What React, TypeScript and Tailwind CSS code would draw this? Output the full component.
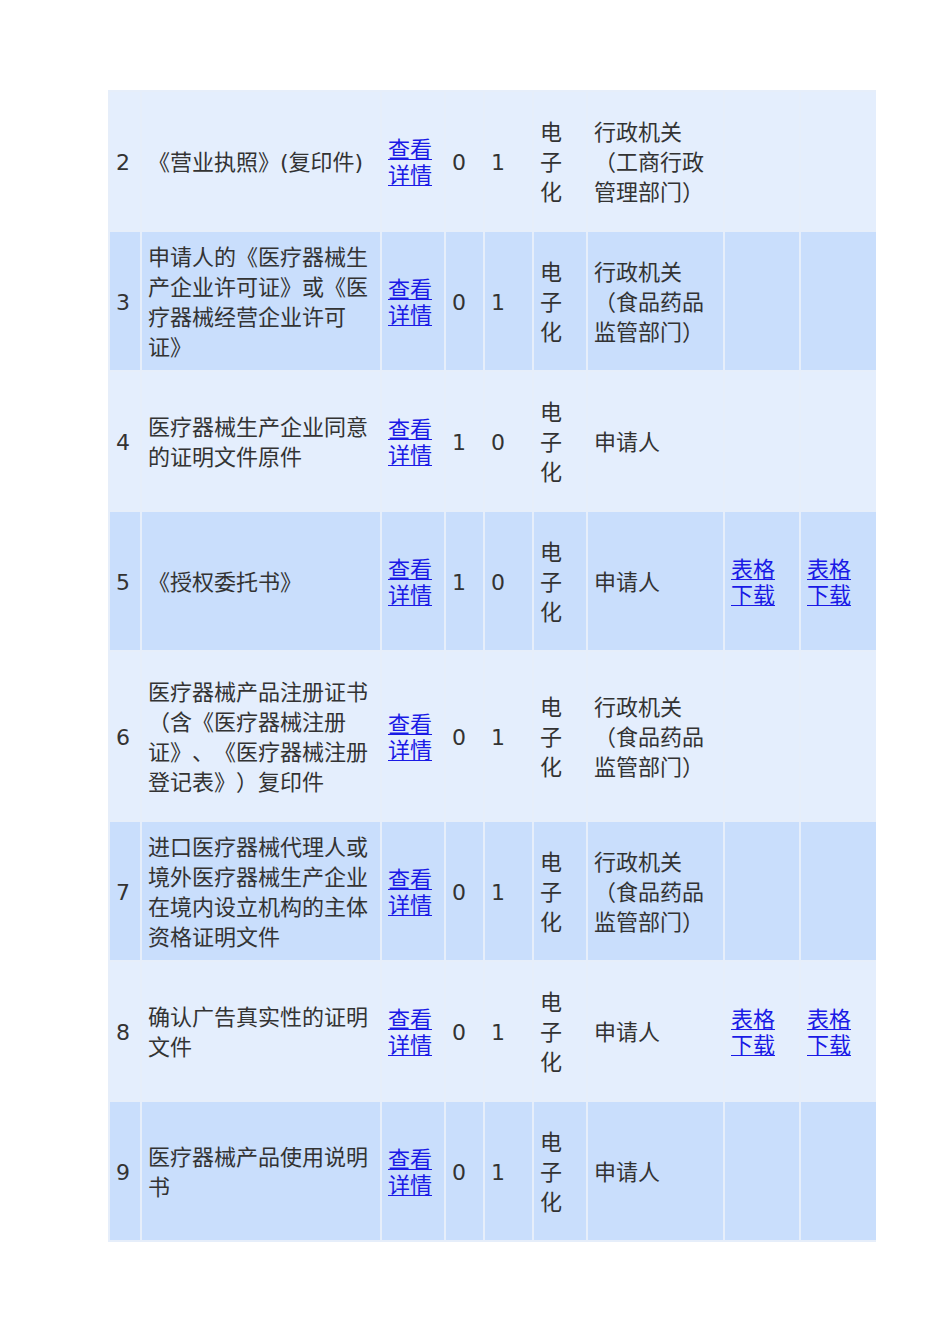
import React from 'react';

type Row = {
  no: string;
  name: React.ReactNode;
  a: string;
  b: string;
  source: React.ReactNode;
  forms?: boolean;
  tall?: boolean;
};

const rows: Row[] = [
  { no: '2', name: <>《营业执照》(复印件)</>, a: '0', b: '1', source: <>行政机关<br />（工商行政<br />管理部门）</> },
  {
    no: '3',
    name: <>申请人的《医疗器械生<br />产企业许可证》或《医<br />疗器械经营企业许可<br />证》</>,
    a: '0', b: '1',
    source: <>行政机关<br />（食品药品<br />监管部门）</>,
  },
  { no: '4', name: <>医疗器械生产企业同意<br />的证明文件原件</>, a: '1', b: '0', source: <>申请人</> },
  { no: '5', name: <>《授权委托书》</>, a: '1', b: '0', source: <>申请人</>, forms: true },
  {
    no: '6',
    name: <>医疗器械产品注册证书<br />（含《医疗器械注册<br />证》、《医疗器械注册<br />登记表》）复印件</>,
    a: '0', b: '1',
    source: <>行政机关<br />（食品药品<br />监管部门）</>,
    tall: true,
  },
  {
    no: '7',
    name: <>进口医疗器械代理人或<br />境外医疗器械生产企业<br />在境内设立机构的主体<br />资格证明文件</>,
    a: '0', b: '1',
    source: <>行政机关<br />（食品药品<br />监管部门）</>,
  },
  { no: '8', name: <>确认广告真实性的证明<br />文件</>, a: '0', b: '1', source: <>申请人</>, forms: true },
  { no: '9', name: <>医疗器械产品使用说明<br />书</>, a: '0', b: '1', source: <>申请人</> },
];

const Link2 = ({ top, bottom }: { top: string; bottom: string }) => (
  <a href="#" className="leading-[26px] text-[#1a1ae6] underline underline-offset-2 decoration-1">
    {top}<br />{bottom}
  </a>
);

export default function App() {
  return (
    <div className="min-h-[1344px] w-[950px] bg-white pt-[90px] pl-[108px]"
      style={{ fontFamily: '"DejaVu Sans", "Noto Sans CJK SC", sans-serif' }}>
      <div className="grid w-[768px] grid-cols-[30px_238px_62px_37px_47px_52px_135px_74px_75px] gap-[2px] bg-[#e6eefa] pt-[2px] pb-[2px] pl-[2px] text-[22px] leading-[30px] text-[#333] [text-spacing-trim:space-all]">
        {rows.map((r, i) => {
          const bg = i % 2 === 0 ? 'bg-[#e4eefd]' : 'bg-[#c9defc]';
          const h = r.tall ? 'h-[168px]' : 'h-[138px]';
          const cell = `${bg} ${h} flex items-center pl-[6px] pt-[4px]`;
          return (
            <React.Fragment key={r.no}>
              <div className={cell}>{r.no}</div>
              <div className={cell}><div>{r.name}</div></div>
              <div className={cell}><Link2 top="查看" bottom="详情" /></div>
              <div className={cell}>{r.a}</div>
              <div className={cell}>{r.b}</div>
              <div className={cell}><div>电<br />子<br />化</div></div>
              <div className={cell}><div>{r.source}</div></div>
              <div className={cell}>{r.forms && <Link2 top="表格" bottom="下载" />}</div>
              <div className={cell}>{r.forms && <Link2 top="表格" bottom="下载" />}</div>
            </React.Fragment>
          );
        })}
      </div>
    </div>
  );
}
